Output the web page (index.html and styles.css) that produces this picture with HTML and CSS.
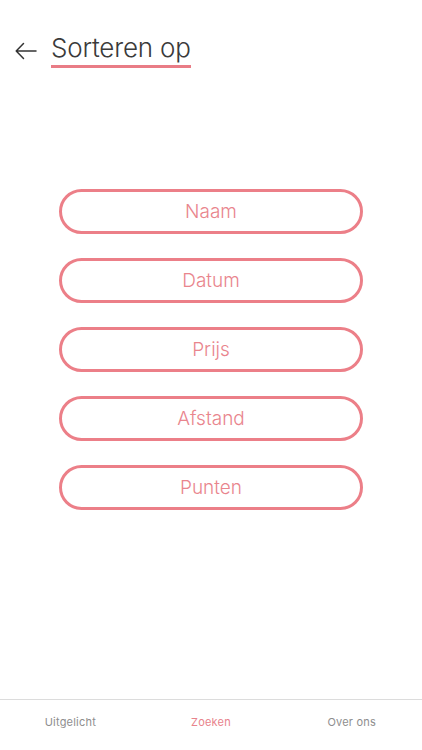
FILE: index.html
```html
<!DOCTYPE html>
<html lang="nl">
<head>
<meta charset="utf-8">
<title>Sorteren op</title>
<link rel="stylesheet" href="styles.css">
</head>
<body>
<div class="app">
  <header class="header">
    <button class="back" aria-label="Terug">
      <svg width="22" height="18" viewBox="0 0 22 18" fill="none" stroke="#333" stroke-width="1.5" stroke-linecap="round" stroke-linejoin="round">
        <path d="M21 9H1.2M8.5 1.5L1.2 9L8.5 16.5"/>
      </svg>
    </button>
    <h1 class="title">Sorteren op</h1>
  </header>
  <main class="options">
    <button class="option">Naam</button>
    <button class="option">Datum</button>
    <button class="option">Prijs</button>
    <button class="option">Afstand</button>
    <button class="option">Punten</button>
  </main>
  <nav class="tabbar">
    <div class="tab">Uitgelicht</div>
    <div class="tab active">Zoeken</div>
    <div class="tab">Over ons</div>
  </nav>
</div>
</body>
</html>
```
FILE: styles.css
```css
* { box-sizing: border-box; }
html, body { margin: 0; padding: 0; background: #fff; }
body { font-family: Inter, "Noto Sans", "Liberation Sans", sans-serif; }
.app {
  width: 422px;
  height: 750px;
  display: flex;
  flex-direction: column;
}
.header {
  display: flex;
  align-items: center;
  padding: 30px 0 0 15px;
  height: 70px;
}
.back {
  border: 0;
  background: none;
  padding: 0;
  width: 22px;
  height: 18px;
  margin-right: 14px;
  margin-top: 2px;
  display: flex;
}
.title {
  margin: 0;
  font-weight: 300;
  font-size: 26px;
  color: #3a3a3a;
  line-height: 30px;
  padding-bottom: 2px;
  border-bottom: 3px solid #e97c86;
  letter-spacing: -0.2px;
}
.options {
  display: flex;
  flex-direction: column;
  align-items: center;
  gap: 24px;
  padding-top: 119px;
  flex: 1;
}
.option {
  width: 304px;
  height: 45px;
  border: 3px solid #ec7f88;
  border-radius: 23px;
  background: #fff;
  color: #e9858d;
  font-family: Inter, "Noto Sans", "Liberation Sans", sans-serif;
  font-size: 19px;
  font-weight: 300;
  padding: 0;
}
.tabbar {
  height: 51px;
  border-top: 1px solid #dcdcdc;
  display: grid;
  grid-template-columns: 1fr 1fr 1fr;
  align-items: center;
  padding-bottom: 6px;
}
.tab {
  text-align: center;
  font-size: 11px;
  color: #8e8e8e;
  line-height: 14px;
  letter-spacing: 0.2px;
}
.tab.active { color: #e8838c; }
```
